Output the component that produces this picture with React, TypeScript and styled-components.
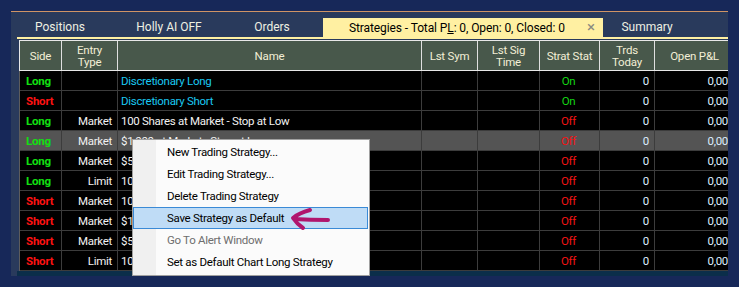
import React from 'react';
import styled, { createGlobalStyle } from 'styled-components';

const FONT = `Roboto, "Liberation Sans", Arial, sans-serif`;

const GlobalStyle = createGlobalStyle`
  html, body {
    margin: 0;
    padding: 0;
    background: #172859;
  }
  body {
    font-family: ${FONT};
    width: 739px;
    height: 287px;
    overflow: hidden;
  }
`;

const Page = styled.div`
  position: relative;
  width: 739px;
  height: 287px;
  box-sizing: border-box;
  padding: 11px 0 0 11px;
  background: #172859;
`;

const Panel = styled.div`
  width: 717px;
  height: 265px;
  box-sizing: border-box;
  border-top: 1px solid #cf9465;
  background: #293a5c;
  overflow: hidden;
  display: flex;
  flex-direction: column;
`;

const TabStrip = styled.div`
  height: 25px;
  display: flex;
  flex-direction: row;
  align-items: flex-end;
`;

const Tab = styled.div<{ $w: number }>`
  width: ${(p) => p.$w}px;
  height: 19px;
  line-height: 19px;
  text-align: center;
  font-size: 12px;
  color: #eef0e2;
  white-space: nowrap;
`;

const ActiveTab = styled.div`
  width: 280px;
  height: 19px;
  margin-left: 8px;
  box-sizing: border-box;
  padding: 0 8px 0 26px;
  display: flex;
  align-items: center;
  justify-content: space-between;
  background: #fff0a2;
  color: #000;
  font-size: 12px;
  letter-spacing: -0.1px;
  white-space: nowrap;
`;

const Mnemonic = styled.span`
  text-decoration: underline;
`;

const CloseX = styled.span`
  color: #8a8a80;
  font-size: 15px;
  line-height: 19px;
`;

const Body = styled.div`
  flex: 1;
  display: flex;
  flex-direction: column;
  padding-left: 6px;
`;

const YellowBar = styled.div`
  height: 2px;
  background: #fff0a2;
  margin-bottom: 1px;
`;

const Grid = styled.div`
  margin-left: 2px;
  display: flex;
  flex-direction: column;
  background: #000;
  border-left: 1px solid #5c5c5c;
`;

const COLS = '42px 56px 304px 56px 62px 60px 55px 80px';

const HeaderRow = styled.div`
  display: grid;
  grid-template-columns: ${COLS};
  height: 31px;
  box-sizing: border-box;
  border-top: 1px solid #e8e8e8;
  border-bottom: 1px solid #e8e8e8;
  margin-left: -1px;
  border-left: 1px solid #e8e8e8;
  background: #48584b;
`;

const HeadCell = styled.div`
  border-right: 1px solid #e0e0e0;
  display: flex;
  align-items: center;
  justify-content: center;
  text-align: center;
  font-size: 11.5px;
  letter-spacing: -0.2px;
  line-height: 12px;
  color: #f2eed6;
  white-space: pre-line;
`;

const Row = styled.div<{ $selected?: boolean }>`
  display: grid;
  grid-template-columns: ${COLS};
  height: 20px;
  box-sizing: border-box;
  border-bottom: 1px solid #3c3c3c;
  background: ${(p) => (p.$selected ? '#545454' : '#000')};
`;

const Cell = styled.div<{ $align?: 'left' | 'right' | 'center'; $color?: string; $bold?: boolean }>`
  border-right: 1px solid #3c3c3c;
  box-sizing: border-box;
  padding: 1px 5px 0 3px;
  line-height: 19px;
  font-size: 11.5px;
  letter-spacing: -0.3px;
  overflow: hidden;
  white-space: nowrap;
  text-align: ${(p) => p.$align || 'left'};
  color: ${(p) => p.$color || '#f2f2f2'};
  font-weight: ${(p) => (p.$bold ? 700 : 400)};
`;

const SideCell = styled(Cell)`
  padding-left: 6px;
  letter-spacing: -0.2px;
`;

const PnlCell = styled(Cell)`
  padding-right: 7px;
  border-right: none;
`;

const BottomStrip = styled.div`
  height: 5px;
  background: #0b2e4a;
`;

const Menu = styled.div`
  position: absolute;
  left: 132px;
  top: 139px;
  width: 238px;
  height: 137px;
  box-sizing: border-box;
  padding: 1px 1px 0 0;
  border: 1px solid #a0a0a0;
  background: linear-gradient(to right, #f0f0f0 0 23px, #fbfbfb 23px);
  font-family: ${FONT};
`;

const MenuItem = styled.div<{ $active?: boolean; $disabled?: boolean }>`
  height: 22px;
  line-height: 20px;
  box-sizing: border-box;
  padding-left: 33px;
  border: 1px solid ${(p) => (p.$active ? '#3a8ad6' : 'transparent')};
  background: ${(p) => (p.$active ? '#bfdcf6' : 'transparent')};
  color: ${(p) => (p.$disabled ? '#6e6e6e' : '#000')};
  font-size: 11.5px;
  letter-spacing: -0.3px;
  white-space: nowrap;
`;

const Arrow = styled.svg`
  position: absolute;
  left: 285px;
  top: 205px;
  width: 50px;
  height: 30px;
`;

const GREEN = '#12e012';
const RED = '#ff1212';
const CYAN = '#1ac8f2';
const NUM = '#dceeff';

type Strategy = {
  side: 'Long' | 'Short';
  entry: string;
  name: string;
  on: boolean;
};

const rows: Strategy[] = [
  { side: 'Long', entry: '', name: 'Discretionary Long', on: true },
  { side: 'Short', entry: '', name: 'Discretionary Short', on: true },
  { side: 'Long', entry: 'Market', name: '100 Shares at Market - Stop at Low', on: false },
  { side: 'Long', entry: 'Market', name: '$1,000 at Market - Stop at Low', on: false },
  { side: 'Long', entry: 'Market', name: '$5,000 at Market - Stop at Low', on: false },
  { side: 'Long', entry: 'Limit', name: '100 Shares Limit - Stop at Low', on: false },
  { side: 'Short', entry: 'Market', name: '100 Shares at Market - Stop at High', on: false },
  { side: 'Short', entry: 'Market', name: '$1,000 at Market - Stop at High', on: false },
  { side: 'Short', entry: 'Market', name: '$5,000 at Market - Stop at High', on: false },
  { side: 'Short', entry: 'Limit', name: '100 Shares Limit - Stop at High', on: false },
];

const headers = ['Side', 'Entry\nType', 'Name', 'Lst Sym', 'Lst Sig\nTime', 'Strat Stat', 'Trds\nToday', 'Open P&L'];

const menuItems = [
  { label: 'New Trading Strategy...' },
  { label: 'Edit Trading Strategy...' },
  { label: 'Delete Trading Strategy' },
  { label: 'Save Strategy as Default', active: true },
  { label: 'Go To Alert Window', disabled: true },
  { label: 'Set as Default Chart Long Strategy' },
];

export default function App() {
  return (
    <>
      <GlobalStyle />
      <Page>
        <Panel>
          <TabStrip>
            <Tab $w={98}>Positions</Tab>
            <Tab $w={120}>Holly AI OFF</Tab>
            <Tab $w={86}>Orders</Tab>
            <ActiveTab>
              <span>
                Strategies - Total P<Mnemonic>L</Mnemonic>: 0, Open: 0, Closed: 0
              </span>
              <CloseX>×</CloseX>
            </ActiveTab>
            <Tab $w={88}>Summary</Tab>
          </TabStrip>
          <Body>
            <YellowBar />
            <Grid>
              <HeaderRow>
                {headers.map((h) => (
                  <HeadCell key={h}>{h}</HeadCell>
                ))}
              </HeaderRow>
              {rows.map((r, i) => (
                <Row key={r.name} $selected={i === 3}>
                  <SideCell $bold $color={r.side === 'Long' ? GREEN : RED}>
                    {r.side}
                  </SideCell>
                  <Cell $align="right">{r.entry}</Cell>
                  <Cell $color={r.entry ? '#f2f2f2' : CYAN}>{r.name}</Cell>
                  <Cell />
                  <Cell />
                  <Cell $align="center" $color={r.on ? '#14d414' : '#f21414'}>
                    {r.on ? 'On' : 'Off'}
                  </Cell>
                  <Cell $align="right" $color={NUM}>
                    0
                  </Cell>
                  <PnlCell $align="right" $color={NUM}>
                    0,00
                  </PnlCell>
                </Row>
              ))}
            </Grid>
            <BottomStrip />
          </Body>
        </Panel>
        <Menu>
          {menuItems.map((m) => (
            <MenuItem key={m.label} $active={m.active} $disabled={m.disabled}>
              {m.label}
            </MenuItem>
          ))}
        </Menu>
        <Arrow viewBox="0 0 50 30">
          <path
            d="M25 5 Q14 8 8 13 Q12 19 18 23 M9 14 Q25 15 43 15"
            fill="none"
            stroke="#b0166e"
            strokeWidth="4"
            strokeLinecap="round"
            strokeLinejoin="round"
          />
        </Arrow>
      </Page>
    </>
  );
}
